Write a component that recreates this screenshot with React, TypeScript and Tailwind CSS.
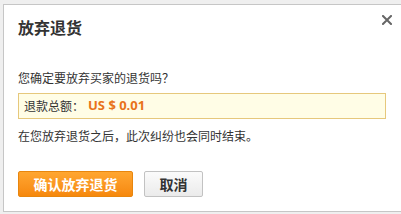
import React from "react";

export default function App() {
  const font = { fontFamily: '"Noto Sans CJK SC", "Liberation Sans", sans-serif' };
  return (
    <div
      className="w-[401px] h-[214px] bg-[#efefef] pt-[4px] pl-[3px] pb-[2px] overflow-hidden"
      style={font}
    >
      <div className="relative h-[208px] bg-white border-t border-l border-b border-[#c6c6c6] px-[14px] pt-[11px]">
        <button className="absolute right-[9px] top-[10px] w-[10px] h-[10px] flex items-center justify-center">
          <svg width="10" height="10" viewBox="0 0 10 10">
            <path d="M1 1 L9 9 M9 1 L1 9" stroke="#666" strokeWidth="2" strokeLinecap="square" />
          </svg>
        </button>
        <div className="text-[16px] leading-[22px] font-bold text-[#333]">放弃退货</div>
        <div className="mt-[31px] text-[12px] leading-[18px] text-[#333]">您确定要放弃买家的退货吗？</div>
        <div className="mt-[6px] w-[368px] h-[26px] border border-[#e6c87c] bg-[#fffde6] pl-[5px] flex items-center text-[12px] text-[#333]">
          <span>退款总额：</span>
          <span className="ml-[4px] text-[13px] font-bold text-[#e8731a]" style={{ fontFamily: '"Open Sans", "Liberation Sans", sans-serif' }}>
            US $ 0.01
          </span>
        </div>
        <div className="mt-[8px] text-[12px] leading-[18px] text-[#333]">在您放弃退货之后，此次纠纷也会同时结束。</div>
        <div className="mt-[26px] flex gap-[11px]">
          <button className="w-[115px] h-[26px] rounded-[2px] border border-[#e8860e] bg-gradient-to-b from-[#ffa630] to-[#f6880b] text-white text-[14px] font-bold leading-[24px]">
            确认放弃退货
          </button>
          <button className="w-[59px] h-[26px] rounded-[2px] border border-[#c2c2c2] bg-gradient-to-b from-[#fbfbfb] to-[#ebebeb] text-[#333] text-[14px] font-bold leading-[24px]">
            取消
          </button>
        </div>
      </div>
    </div>
  );
}
